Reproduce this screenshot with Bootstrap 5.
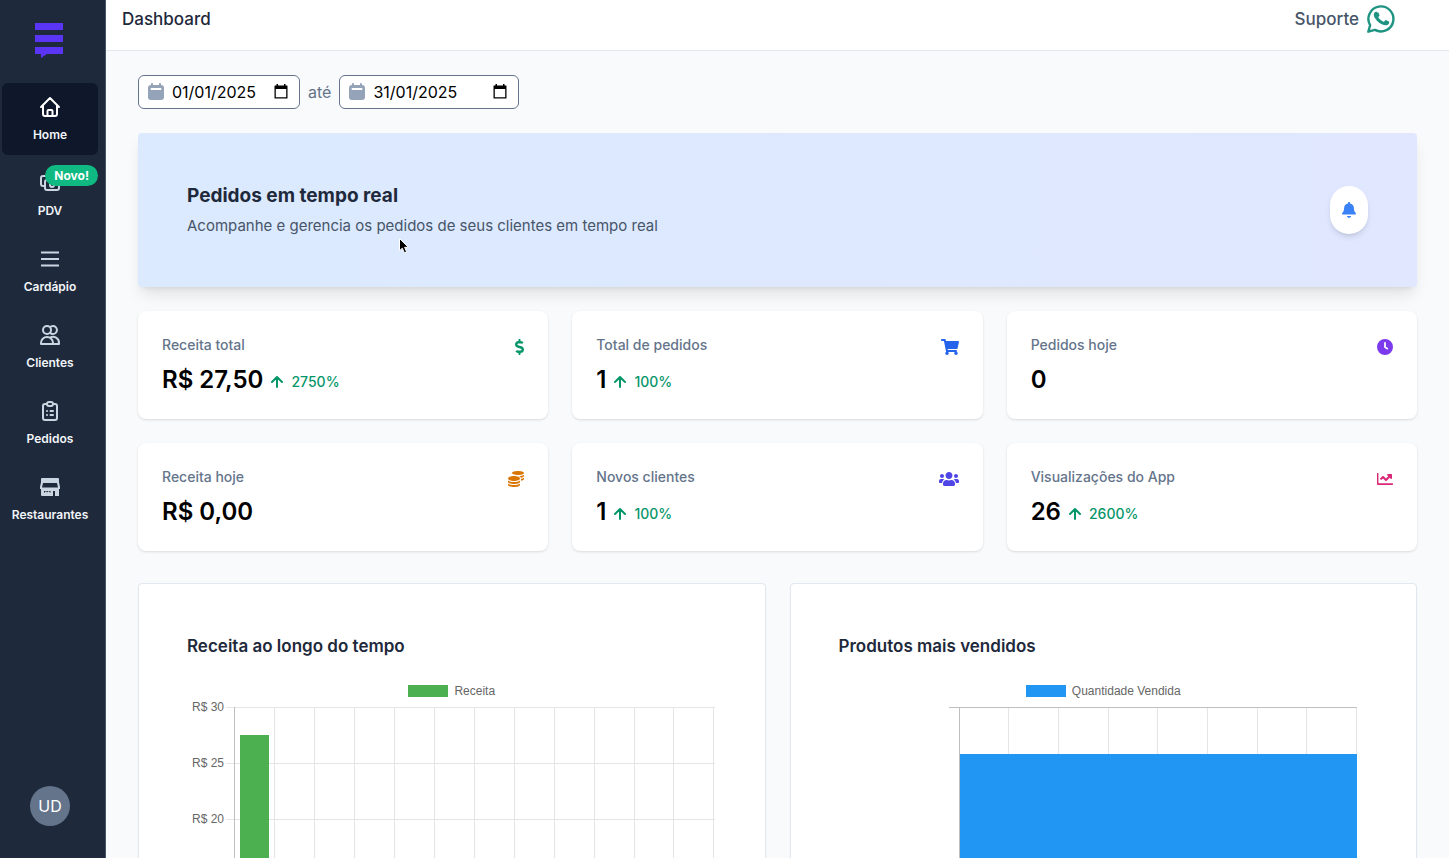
<!DOCTYPE html>
<html lang="pt-BR">
<head>
<meta charset="utf-8">
<meta name="viewport" content="width=device-width, initial-scale=1">
<title>Dashboard</title>
<link href="https://cdn.jsdelivr.net/npm/bootstrap@5.3.0/dist/css/bootstrap.min.css" rel="stylesheet">
<style>
  body { font-family: Inter, "Liberation Sans", sans-serif; background: #f8fafc; color: #1e293b; }
  svg { display: block; flex: none; }
  .side { width: 106px; flex: none; background: #1e293b; padding: 22px 7px 32px 2px; border-right: 1px solid #475569; }
  .brand { margin: 0 auto 24px; width: 30px; height: 37px; }
  .side-item { height: 72px; padding: 12px 0; border-radius: 6px; color: #f1f5f9; font-size: 12px; line-height: 16px; font-weight: 600; text-decoration: none; }
  .side-item svg { color: #cbd5e1; }
  .side-item.active { background: #0f172a; }
  .side-item.active svg { color: #fff; }
  .novo { top: 6px; right: 0; background: #10b981; color: #fff; font-size: 12px; line-height: 21px; font-weight: 700; padding: 0 9px; border-radius: 11px; }
  .avatar { width: 40px; height: 40px; background: #64748b; color: #fff; font-size: 16px; }
  .page { min-width: 0; overflow-y: auto; scrollbar-width: none; }
  .page::-webkit-scrollbar { display: none; }
  .topbar { padding: 5px 54px 17px 16px; background: #fff; border-bottom: 1px solid #e2e8f0; }
  .topbar h1 { font-size: 17px; line-height: 28px; font-weight: 500; }
  .topbar a { color: #475569; font-size: 17px; line-height: 28px; font-weight: 500; text-decoration: none; }
  .body-area { padding: 24px 32px; }
  .date-box { height: 34px; border: 1px solid #64748b; border-radius: 6px; background: #fff; padding: 0 10px 0 9px; }
  .date-box input { border: 0; padding: 0; background: none; color: #000; font-size: 16px; line-height: 24px; outline: 0; min-width: 0; }
  .date-box button { border: 0; background: none; padding: 0; color: #000; }
  .date-start { width: 162px; }
  .date-end { width: 180px; }
  .until { color: #64748b; font-size: 16px; }
  .banner { padding: 49px; border-radius: 4px; background: linear-gradient(to right, #dbeafe, #e0e7ff); box-shadow: 0 10px 15px -3px rgba(0,0,0,.1), 0 4px 6px -4px rgba(0,0,0,.1); }
  .banner h2 { font-size: 19px; line-height: 28px; font-weight: 700; margin-bottom: 4px; }
  .banner p { font-size: 15px; line-height: 24px; color: #475569; }
  .bell { width: 38px; height: 48px; border: 0; border-radius: 24px; background: #fff; color: #3b82f6; box-shadow: 0 4px 6px -1px rgba(0,0,0,.1), 0 2px 4px -2px rgba(0,0,0,.1); }
  .pointer { left: 260px; top: 104px; }
  .tile { background: #fff; border-radius: 8px; padding: 24px; box-shadow: 0 1px 3px rgba(0,0,0,.1), 0 1px 2px -1px rgba(0,0,0,.1); }
  .tile h3 { font-size: 14px; line-height: 20px; font-weight: 500; color: #64748b; margin-bottom: 10px; }
  .tile .value { font-size: 24px; line-height: 30px; font-weight: 600; color: #000; }
  .tile .rise { font-size: 14px; line-height: 20px; font-weight: 500; color: #059669; }
  .tile-icon { height: 24px; }
  .chart-box { background: #fff; border: 1px solid #e2e8f0; border-radius: 4px; padding: 48px 48px 32px; box-shadow: 0 1px 2px rgba(0,0,0,.05); }
  .chart-box h2 { font-size: 17px; line-height: 28px; font-weight: 600; margin-bottom: 24px; }
  .legend-row { font: 12px/14px "Liberation Sans", Arial, sans-serif; color: #666; margin-bottom: 9px; gap: 6px; }
  .swatch { width: 40px; height: 12px; }
  .green { background: #4caf50; }
  .blue { background: #2196f3; }
  .plot { height: 337px; }
  .y-labels { width: 37px; margin-right: 2px; font: 12px/14px "Liberation Sans", Arial, sans-serif; color: #666; text-align: right; margin-top: -7px; }
  .y-labels div { height: 56px; }
  .h-lines { background: repeating-linear-gradient(to bottom, #e5e5e5 0 1px, transparent 1px 56px); }
  .tick { width: 8px; }
  .cells { border-left: 1px solid #bfbfbf; }
  .cells > div { flex: 1 1 0; border-right: 1px solid #e5e5e5; }
  .bar-v { width: 74%; }
  .revenue { padding-right: 2px; }
  .sold { padding: 0 11px 0 110px; }
  .sold .tick { width: 10px; height: 1px; background: #bfbfbf; }
  .sold .cells { border-top: 1px solid #bfbfbf; }
  .bar-h { left: 0; right: 0; top: 46px; height: 242px; }
</style>
</head>
<body>
<div class="d-flex vh-100">
  <nav class="side d-flex flex-column" aria-label="Principal">
    <svg class="brand" viewBox="0 0 30 37" fill="#5b35f5"><path d="M0 1h28v7H0zM0 13h28v7H0zM0 25h28v7H12l-6 4v-4H0z"/></svg>
    <div class="d-flex flex-column gap-1">
      <a href="#" class="side-item active d-flex flex-column align-items-center gap-2">
        <svg width="24" height="24" viewBox="0 0 24 24" fill="none" stroke="currentColor" stroke-width="2" stroke-linejoin="round" stroke-linecap="round"><path d="M3 12l9-9 9 9M5 10.500V19a2 2 0 0 0 2 2h10a2 2 0 0 0 2-2v-8.500M9.500 21v-5a1 1 0 0 1 1-1h3a1 1 0 0 1 1 1v5"/></svg>
        Home</a>
      <a href="#" class="side-item position-relative d-flex flex-column align-items-center gap-2">
        <svg width="24" height="24" viewBox="0 0 24 24" fill="none" stroke="currentColor" stroke-width="2" stroke-linejoin="round"><path d="M17 9V7a2 2 0 0 0-2-2H5a2 2 0 0 0-2 2v6a2 2 0 0 0 2 2h2"/><rect x="7" y="9" width="14" height="10" rx="2"/><circle cx="14" cy="14" r="2"/></svg>
        <span class="novo position-absolute">Novo!</span>
        PDV</a>
      <a href="#" class="side-item d-flex flex-column align-items-center gap-2">
        <svg width="24" height="24" viewBox="0 0 24 24" fill="none" stroke="currentColor" stroke-width="2"><path d="M3 5.500h18M3 12h18M3 18.500h18"/></svg>
        Cardápio</a>
      <a href="#" class="side-item d-flex flex-column align-items-center gap-2">
        <svg width="24" height="24" viewBox="0 0 24 24" fill="none" stroke="currentColor" stroke-width="2" stroke-linejoin="round"><circle cx="9" cy="7" r="4"/><path d="M12 4.300a4 4 0 1 1 0 5.400M3 21v-1a6 6 0 0 1 12 0v1zM12 14.700A6 6 0 0 1 21 20v1h-6"/></svg>
        Clientes</a>
      <a href="#" class="side-item d-flex flex-column align-items-center gap-2">
        <svg width="24" height="24" viewBox="0 0 24 24" fill="none" stroke="currentColor" stroke-width="2" stroke-linecap="round" stroke-linejoin="round"><path d="M9 5H7a2 2 0 0 0-2 2v12a2 2 0 0 0 2 2h10a2 2 0 0 0 2-2V7a2 2 0 0 0-2-2h-2"/><rect x="9" y="3" width="6" height="4" rx="2"/><path d="M9 12h.01M9 16h.01M12.500 12H15M12.500 16H15"/></svg>
        Pedidos</a>
      <a href="#" class="side-item d-flex flex-column align-items-center gap-2">
        <svg width="24" height="24" viewBox="0 0 24 24" fill="currentColor"><path fill-rule="evenodd" d="M4 3h16a1 1 0 0 1 1 1v3l1 5v2h-1v7h-4v-5h-2v5H4a1 1 0 0 1-1-1v-6H2v-2l1-5V4a1 1 0 0 1 1-1zM5 8l-1 4.500h16L19 8zM6 16v2l2-2 1 1.500L10.500 16l2 2v-2z"/></svg>
        Restaurantes</a>
    </div>
    <div class="avatar rounded-circle d-flex align-items-center justify-content-center mt-auto mx-auto">UD</div>
  </nav>

  <div class="page flex-grow-1">
    <header class="topbar d-flex align-items-center justify-content-between">
      <h1 class="m-0">Dashboard</h1>
      <a href="#" class="d-flex align-items-center gap-2">Suporte
        <svg width="28" height="28" viewBox="0 0 28 28"><path d="M1.300 26.700l1.800-6.500A12.500 12.500 0 1 1 7.900 24.900z" fill="none" stroke="#1f9382" stroke-width="2.400" stroke-linejoin="round"/><path d="M10.200 7.400c-.3-.7-.6-.7-1.100-.7-1 0-2.300 1-2.300 3 0 1.800 1.300 3.600 1.500 3.900.2.300 2.600 4.200 6.500 5.700 3.200 1.300 3.900 1 4.600.9.700-.1 2.200-.9 2.500-1.800.3-.9.300-1.600.2-1.800-.4-.5-3-1.700-3.400-1.700-.7 0-1.300 1.900-2 1.900-.6 0-4.800-2.600-5.300-4.500 0-.5 1.200-1.300 1.100-2-.1-.5-.8-2-1.100-2.900z" fill="#1f9382"/></svg>
      </a>
    </header>

    <main class="body-area">
      <div class="d-flex align-items-center gap-2 mb-4">
        <div class="date-box date-start d-flex align-items-center gap-2">
          <svg width="16" height="18" viewBox="0 0 16 18" fill="#94a3b8"><path fill-rule="evenodd" d="M3 1a1 1 0 0 1 2 0v1h6V1a1 1 0 0 1 2 0v1a3 3 0 0 1 3 3v9a3 3 0 0 1-3 3H3a3 3 0 0 1-3-3V5a3 3 0 0 1 3-3zM3.500 5a1 1 0 0 0 0 2h9a1 1 0 0 0 0-2z"/></svg>
          <input class="flex-grow-1 w-100" type="text" value="01/01/2025" aria-label="Data inicial">
          <button type="button" aria-label="Abrir calendário inicial"><svg width="16" height="16" viewBox="0 0 16 16"><path fill="currentColor" fill-rule="evenodd" d="M3.500 0h1.500v1.500h6V0h1.500v1.500h1.500a.5.500 0 0 1 .5.500v12a.5.500 0 0 1-.5.500h-12a.5.500 0 0 1-.5-.5V2a.5.500 0 0 1 .5-.5h1.500zM2.800 5v8.200h10.400V5z"/></svg></button>
        </div>
        <span class="until">até</span>
        <div class="date-box date-end d-flex align-items-center gap-2">
          <svg width="16" height="18" viewBox="0 0 16 18" fill="#94a3b8"><path fill-rule="evenodd" d="M3 1a1 1 0 0 1 2 0v1h6V1a1 1 0 0 1 2 0v1a3 3 0 0 1 3 3v9a3 3 0 0 1-3 3H3a3 3 0 0 1-3-3V5a3 3 0 0 1 3-3zM3.500 5a1 1 0 0 0 0 2h9a1 1 0 0 0 0-2z"/></svg>
          <input class="flex-grow-1 w-100" type="text" value="31/01/2025" aria-label="Data final">
          <button type="button" aria-label="Abrir calendário final"><svg width="16" height="16" viewBox="0 0 16 16"><path fill="currentColor" fill-rule="evenodd" d="M3.500 0h1.500v1.500h6V0h1.500v1.500h1.500a.5.500 0 0 1 .5.500v12a.5.500 0 0 1-.5.500h-12a.5.500 0 0 1-.5-.5V2a.5.500 0 0 1 .5-.5h1.500zM2.800 5v8.200h10.400V5z"/></svg></button>
        </div>
      </div>

      <section class="banner position-relative d-flex align-items-center justify-content-between mb-4">
        <div>
          <h2 class="mt-0">Pedidos em tempo real</h2>
          <p class="m-0">Acompanhe e gerencia os pedidos de seus clientes em tempo real</p>
        </div>
        <button type="button" class="bell d-flex align-items-center justify-content-center" aria-label="Notificações"><svg width="14" height="16" viewBox="0 0 448 512" fill="currentColor"><path d="M224 0c-18 0-32 14-32 32v12C118 59 68 110 68 190c0 90-34 135-60 164-6 7-8 14-8 22 0 14 10 24 26 24h396c16 0 26-10 26-24 0-8-2-15-8-22-26-29-60-74-60-164 0-80-50-131-124-146V32c0-18-14-32-32-32zM160 448c0 35 29 56 64 56s64-21 64-56z"/></svg></button>
        <svg class="pointer position-absolute" width="12" height="18" viewBox="0 0 12 18"><path d="M1.500 1.500v12.300l2.800-2.600 2 4.600 2.300-1-2-4.500h3.800z" fill="#000" stroke="#fff"/></svg>
      </section>

      <div class="row g-4 mb-4 pb-2">
        <div class="col-4"><div class="tile d-flex justify-content-between">
          <div><h3>Receita total</h3>
            <div class="d-flex align-items-baseline gap-2"><span class="value">R$ 27,50</span><span class="rise d-flex align-items-center gap-2"><svg width="12" height="12" viewBox="0 0 12 12" fill="none" stroke="currentColor" stroke-width="2" stroke-linecap="round" stroke-linejoin="round"><path d="M6 11V1M1 6l5-5 5 5"/></svg>2750%</span></div></div>
          <div class="tile-icon d-flex align-items-center"><svg width="9" height="16" viewBox="0 0 288 512" fill="#059669"><path d="M209.200 233.400l-108-31.600C88.700 198.200 80 186.500 80 173.500c0-16.300 13.200-29.500 29.500-29.500h66.300c12.200 0 24.200 3.700 34.200 10.500 6.100 4.100 14.300 3.100 19.500-2l34.800-34c7.100-6.900 6.100-18.400-1.800-24.500C238 74.800 207.400 64.100 176 64V16c0-8.800-7.200-16-16-16h-32c-8.800 0-16 7.200-16 16v48h-2.500C45.800 64-5.400 118.700.5 183.600c4.200 46.100 39.400 83.600 83.800 96.600l102.500 30c12.500 3.700 21.200 15.300 21.200 28.300 0 16.300-13.200 29.500-29.500 29.500h-66.300C100 368 88 364.300 78 357.500c-6.100-4.100-14.300-3.100-19.500 2l-34.800 34c-7.100 6.900-6.100 18.400 1.800 24.500 24.500 19.200 55.100 29.900 86.500 30v48c0 8.800 7.200 16 16 16h32c8.800 0 16-7.200 16-16v-48.200c46.600-.9 90.300-28.600 105.700-72.700 21.500-61.600-14.600-124.800-72.500-141.700z"/></svg></div>
        </div></div>
        <div class="col-4"><div class="tile d-flex justify-content-between">
          <div><h3>Total de pedidos</h3>
            <div class="d-flex align-items-baseline gap-2"><span class="value">1</span><span class="rise d-flex align-items-center gap-2"><svg width="12" height="12" viewBox="0 0 12 12" fill="none" stroke="currentColor" stroke-width="2" stroke-linecap="round" stroke-linejoin="round"><path d="M6 11V1M1 6l5-5 5 5"/></svg>100%</span></div></div>
          <div class="tile-icon d-flex align-items-center"><svg width="18" height="16" viewBox="0 0 576 512" fill="#2563eb"><path d="M528.120 301.319l47.273-208C578.806 78.301 567.391 64 551.990 64H159.208l-9.166-44.810C147.758 8.021 137.930 0 126.529 0H24C10.745 0 0 10.745 0 24v16c0 13.255 10.745 24 24 24h69.883l70.248 343.435C147.325 417.100 136 435.222 136 456c0 30.928 25.072 56 56 56s56-25.072 56-56c0-15.674-6.447-29.835-16.824-40h209.647C430.447 426.165 424 440.326 424 456c0 30.928 25.072 56 56 56s56-25.072 56-56c0-22.172-12.888-41.332-31.579-50.405l5.517-24.276c3.413-15.018-8.002-29.319-23.403-29.319H218.117l-6.545-32h293.145c11.206 0 20.920-7.754 23.403-18.681z"/></svg></div>
        </div></div>
        <div class="col-4"><div class="tile d-flex justify-content-between">
          <div><h3>Pedidos hoje</h3>
            <div class="d-flex align-items-baseline gap-2"><span class="value">0</span></div></div>
          <div class="tile-icon d-flex align-items-center"><svg width="16" height="16" viewBox="0 0 512 512" fill="#7c3aed"><path fill-rule="evenodd" d="M256 0a256 256 0 1 1 0 512A256 256 0 1 1 256 0zM228 116V260c0 9 4 16 11 21l92 62 32-44-79-55V116c0-14-12-24-28-24s-28 10-28 24z"/></svg></div>
        </div></div>
        <div class="col-4"><div class="tile d-flex justify-content-between">
          <div><h3>Receita hoje</h3>
            <div class="d-flex align-items-baseline gap-2"><span class="value">R$ 0,00</span></div></div>
          <div class="tile-icon d-flex align-items-center"><svg width="16" height="16" viewBox="0 0 512 512" fill="#d97706"><path d="M0 405.300V448c0 35.300 86 64 192 64s192-28.700 192-64v-42.700C342.700 434.400 267.200 448 192 448S41.300 434.400 0 405.300zM320 128c106 0 192-28.700 192-64S426 0 320 0 128 28.700 128 64s86 64 192 64zM0 300.400V352c0 35.300 86 64 192 64s192-28.700 192-64v-51.600c-41.300 34-116.900 51.600-192 51.600S41.300 334.400 0 300.400zm416 11c57.300-11.100 96-31.700 96-55.400v-42.700c-23.200 16.400-57.300 27.600-96 34.500v63.600zM192 160C86 160 0 195.800 0 240s86 80 192 80 192-35.800 192-80-86-80-192-80zm219.300 56.300c60-10.800 100.700-32 100.700-56.300v-42.700c-35.500 25.100-96.500 38.600-160.700 41.800 29.500 14.300 51.200 33.500 60 57.200z"/></svg></div>
        </div></div>
        <div class="col-4"><div class="tile d-flex justify-content-between">
          <div><h3>Novos clientes</h3>
            <div class="d-flex align-items-baseline gap-2"><span class="value">1</span><span class="rise d-flex align-items-center gap-2"><svg width="12" height="12" viewBox="0 0 12 12" fill="none" stroke="currentColor" stroke-width="2" stroke-linecap="round" stroke-linejoin="round"><path d="M6 11V1M1 6l5-5 5 5"/></svg>100%</span></div></div>
          <div class="tile-icon d-flex align-items-center"><svg width="20" height="16" viewBox="0 0 640 512" fill="#4f46e5"><path d="M96 224c35.300 0 64-28.700 64-64s-28.700-64-64-64-64 28.700-64 64 28.700 64 64 64zm448 0c35.300 0 64-28.700 64-64s-28.700-64-64-64-64 28.700-64 64 28.700 64 64 64zm32 32h-64c-17.600 0-33.500 7.100-45.100 18.600 40.300 22.100 68.900 62 75.100 109.400h66c17.700 0 32-14.300 32-32v-32c0-35.300-28.700-64-64-64zm-256 0c61.900 0 112-50.100 112-112S381.900 32 320 32 208 82.100 208 144s50.100 112 112 112zm76.800 32h-8.300c-20.800 10-43.900 16-68.500 16s-47.600-6-68.500-16h-8.300C179.600 288 128 339.600 128 403.200V432c0 26.500 21.500 48 48 48h288c26.500 0 48-21.500 48-48v-28.800c0-63.600-51.600-115.200-115.200-115.200zm-223.700-13.400C161.500 263.100 145.600 256 128 256H64c-35.300 0-64 28.700-64 64v32c0 17.700 14.300 32 32 32h65.900c6.300-47.400 34.900-87.300 75.200-109.400z"/></svg></div>
        </div></div>
        <div class="col-4"><div class="tile d-flex justify-content-between">
          <div><h3>Visualizações do App</h3>
            <div class="d-flex align-items-baseline gap-2"><span class="value">26</span><span class="rise d-flex align-items-center gap-2"><svg width="12" height="12" viewBox="0 0 12 12" fill="none" stroke="currentColor" stroke-width="2" stroke-linecap="round" stroke-linejoin="round"><path d="M6 11V1M1 6l5-5 5 5"/></svg>2600%</span></div></div>
          <div class="tile-icon d-flex align-items-center"><svg width="16" height="16" viewBox="0 0 512 512" fill="#db2777"><path d="M496 394H46V80c0-9-5-16-14-16H14C5 64 0 71 0 80v336c0 18 12 28 28 28h468c9 0 16-7 16-16v-18c0-9-7-16-16-16zM464 96H346c-21 0-32 26-17 41l32 32-73 74-73-74c-13-12-33-12-46 0l-68 69c-7 6-7 16 0 23l22 22c7 6 17 6 23 0l46-46 73 74c13 12 33 12 46 0l96-97 32 33c15 15 41 4 41-17V112c0-9-7-16-16-16z"/></svg></div>
        </div></div>
      </div>

      <div class="row g-4">
        <div class="col-6"><section class="chart-box">
          <h2 class="mt-0">Receita ao longo do tempo</h2>
          <div class="legend-row d-flex align-items-center justify-content-center"><span class="swatch green"></span>Receita</div>
          <div class="plot revenue d-flex">
            <div class="y-labels"><div>R$ 30</div><div>R$ 25</div><div>R$ 20</div></div>
            <div class="tick h-lines"></div>
            <div class="cells h-lines d-flex flex-grow-1">
              <div class="d-flex align-items-end justify-content-center"><div class="bar-v green" style="height:91.700%"></div></div>
              <div></div><div></div><div></div><div></div><div></div><div></div><div></div><div></div><div></div><div></div><div></div>
            </div>
          </div>
        </section></div>
        <div class="col-6"><section class="chart-box">
          <h2 class="mt-0">Produtos mais vendidos</h2>
          <div class="legend-row d-flex align-items-center justify-content-center"><span class="swatch blue"></span>Quantidade Vendida</div>
          <div class="plot sold d-flex">
            <div class="tick"></div>
            <div class="cells position-relative d-flex flex-grow-1">
              <div></div><div></div><div></div><div></div><div></div><div></div><div></div><div></div>
              <span class="bar-h blue position-absolute"></span>
            </div>
          </div>
        </section></div>
      </div>
    </main>
  </div>
</div>
<script src="https://cdn.jsdelivr.net/npm/bootstrap@5.3.0/dist/js/bootstrap.bundle.min.js"></script>
</body>
</html>
